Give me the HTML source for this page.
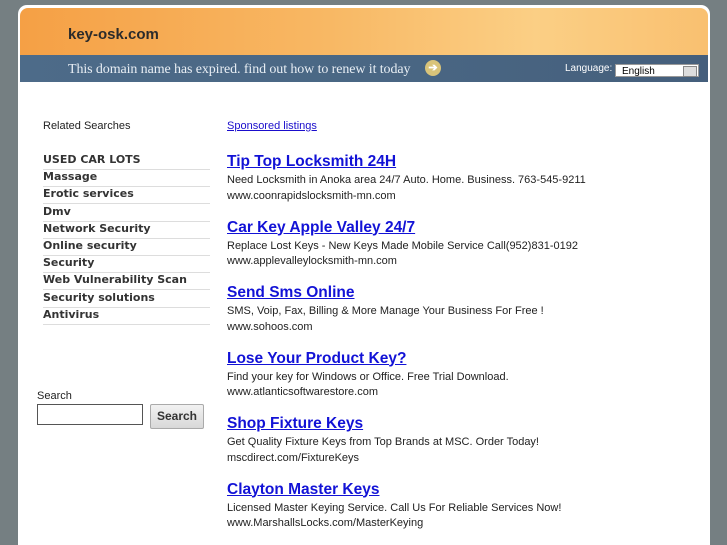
<!DOCTYPE html>
<html><head><style>
html,body{margin:0;width:727px;height:545px;overflow:hidden}
body{background:#757f82;font-family:"Liberation Sans",sans-serif;position:relative}
.page{position:absolute;left:18px;top:5px;width:692px;height:540px;background:#fff;border-radius:9px 9px 0 0}
.hdr{position:absolute;left:20px;top:8px;width:688px;height:47px;border-radius:8px 8px 0 0;background:linear-gradient(90deg,#f5a045 0%,#f8b864 45%,#fbcf85 75%,#f9c070 100%)}
.hdr b{position:absolute;left:48px;top:18px;font-size:15px;color:#2b2b2b}
.bar{position:absolute;left:20px;top:55px;width:688px;height:27px;background:linear-gradient(90deg,#4d6b89,#4a6784 50%,#455f7c)}
.bar .msg{position:absolute;left:48px;top:7px;font-family:"Liberation Serif",serif;font-size:14px;color:#e8eef4;letter-spacing:-0.1px}
.bar .ic{position:absolute;left:405px;top:5px;width:16px;height:16px;border-radius:50%;background:#d9c47a;color:#fff;font-size:11px;text-align:center;line-height:16px;font-weight:bold}
.bar .lang{position:absolute;left:545px;top:8px;font-size:10px;color:#fff}
.bar .sel{position:absolute;left:595px;top:9px;height:13px;background:#fff;border:1px solid #999;font-size:10px;line-height:13px;padding-left:6px;box-sizing:border-box;width:84px}
.bar .sel i{position:absolute;right:1px;top:1px;width:12px;height:9px;background:#ddd;border:1px solid #888}
.rs{position:absolute;left:43px;top:120px;font-size:11px;color:#222}
.list{position:absolute;left:43px;top:153px;width:167px}
.list div{font-family:"DejaVu Sans",sans-serif;font-weight:bold;font-size:11px;color:#333;height:16px;line-height:14px;border-bottom:1px solid #ddd;margin-bottom:0.2px}
.sp{position:absolute;left:227px;top:120px;font-size:11px;color:#1a0dcc;text-decoration:underline}
.ads{position:absolute;left:227px;top:153px}
.ad{height:65.5px}
.ad a{display:block;font-size:15.5px;font-weight:bold;color:#1212d6;text-decoration:underline;height:20px}
.ad p{margin:0;font-size:11px;color:#222;line-height:15.5px}
.sl{position:absolute;left:37px;top:390px;font-size:11px;color:#222}
.sb{position:absolute;left:37px;top:404px;height:21px;border:1px solid #555;box-sizing:border-box;width:106px}
.btn{position:absolute;left:150px;top:404px;width:54px;height:25px;background:linear-gradient(#f2f2f2,#d8d8d8);border:1px solid #aaa;box-sizing:border-box;font-size:12px;font-weight:bold;color:#333;text-align:center;line-height:23px;border-radius:2px}
</style></head><body>
<div class="page"></div>
<div class="hdr"><b>key-osk.com</b></div>
<div class="bar"><span class="msg">This domain name has expired. find out how to renew it today</span><span class="ic">➔</span><span class="lang">Language:</span><span class="sel">English<i></i></span></div>
<div class="rs">Related Searches</div>
<div class="list"><div>USED CAR LOTS</div><div>Massage</div><div>Erotic services</div><div>Dmv</div><div>Network Security</div><div>Online security</div><div>Security</div><div>Web Vulnerability Scan</div><div>Security solutions</div><div>Antivirus</div></div>
<div class="sp">Sponsored listings</div>
<div class="ads">
<div class="ad"><a>Tip Top Locksmith 24H</a><p>Need Locksmith in Anoka area 24/7 Auto. Home. Business. 763-545-9211</p><p>www.coonrapidslocksmith-mn.com</p></div>
<div class="ad"><a>Car Key Apple Valley 24/7</a><p>Replace Lost Keys - New Keys Made Mobile Service Call(952)831-0192</p><p>www.applevalleylocksmith-mn.com</p></div>
<div class="ad"><a>Send Sms Online</a><p>SMS, Voip, Fax, Billing &amp; More Manage Your Business For Free !</p><p>www.sohoos.com</p></div>
<div class="ad"><a>Lose Your Product Key?</a><p>Find your key for Windows or Office. Free Trial Download.</p><p>www.atlanticsoftwarestore.com</p></div>
<div class="ad"><a>Shop Fixture Keys</a><p>Get Quality Fixture Keys from Top Brands at MSC. Order Today!</p><p>mscdirect.com/FixtureKeys</p></div>
<div class="ad"><a>Clayton Master Keys</a><p>Licensed Master Keying Service. Call Us For Reliable Services Now!</p><p>www.MarshallsLocks.com/MasterKeying</p></div>
</div>
<div class="sl">Search</div>
<div class="sb"></div>
<div class="btn">Search</div>
</body></html>
